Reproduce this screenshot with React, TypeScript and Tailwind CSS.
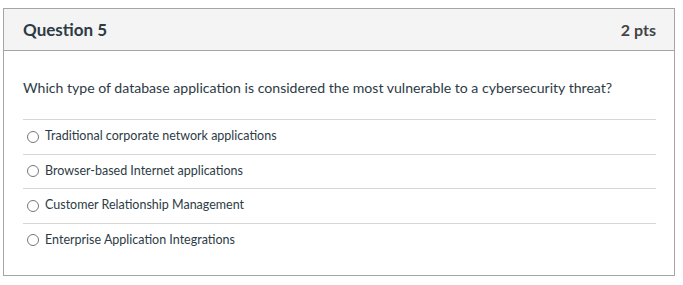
import React from "react";

const options = [
  "Traditional corporate network applications",
  "Browser-based Internet applications",
  "Customer Relationship Management",
  "Enterprise Application Integrations",
];

export default function App() {
  return (
    <div className="w-[683px] h-[285px] bg-white pt-[8px] pl-[3px]" style={{ fontFamily: "Lato, 'Liberation Sans', sans-serif" }}>
      <div className="w-[672px] h-[268px] border border-[#a5a5a5] text-[#2d3b45]">
        <div className="h-[42px] bg-[#f4f4f4] border-b border-[#a5a5a5] flex items-center justify-between pl-[19px] pr-[18px]">
          <span className="text-[17px] font-bold">Question 5</span>
          <span className="text-[16px] font-bold text-[#444]">2 pts</span>
        </div>
        <div className="pl-[19px] pr-[18px]">
          <p className="text-[14.1px] mt-[28px] leading-[18px]">
            Which type of database application is considered the most vulnerable to a cybersecurity threat?
          </p>
          <div className="mt-[22px]">
            {options.map((o) => (
              <div key={o} className="h-[34.5px] border-t border-[#d6d6d6] flex items-center pl-[4px] gap-[6px]">
                <span className="w-[12px] h-[12px] rounded-full border border-[#777] bg-white" />
                <span className="text-[12.5px]">{o}</span>
              </div>
            ))}
          </div>
        </div>
      </div>
    </div>
  );
}
